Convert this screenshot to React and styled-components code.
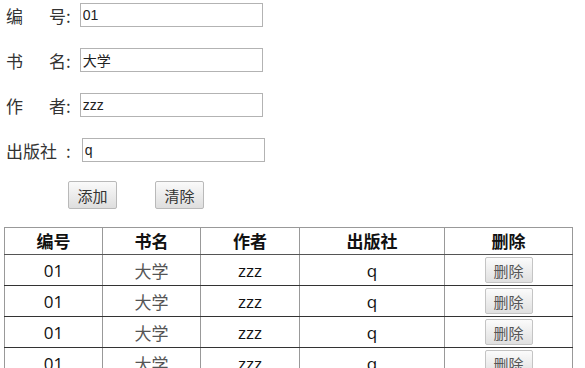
import React from 'react';
import styled, { createGlobalStyle } from 'styled-components';

const fields = [
  { chars: '编号', value: '01', spread: true },
  { chars: '书名', value: '大学', spread: true },
  { chars: '作者', value: 'zzz', spread: true },
  { chars: '出版社', value: 'q', spread: false },
];

const rows = [1, 2, 3, 4].map((i) => ({
  id: i,
  no: '01',
  name: '大学',
  author: 'zzz',
  press: 'q',
}));

export default function App() {
  return (
    <Page>
      <GlobalStyle />
      <Form>
        {fields.map((f) => (
          <FormRow key={f.chars}>
            <LabelText spread={f.spread}>{f.spread ? f.chars : f.chars + ' '}</LabelText>
            <Colon>:</Colon>
            <TextInput defaultValue={f.value} shift={f.spread ? 0 : 2} />
          </FormRow>
        ))}
        <Actions>
          <GrayButton>添加</GrayButton>
          <GrayButton>清除</GrayButton>
        </Actions>
      </Form>

      <Table>
        <thead>
          <tr>
            <Th width={97}>编号</Th>
            <Th width={97}>书名</Th>
            <Th width={98}>作者</Th>
            <Th width={144}>出版社</Th>
            <Th>删除</Th>
          </tr>
        </thead>
        <tbody>
          {rows.map((r) => (
            <tr key={r.id}>
              <Td>{r.no}</Td>
              <Td muted>{r.name}</Td>
              <Td>{r.author}</Td>
              <Td>{r.press}</Td>
              <Td>
                <SmallButton>删除</SmallButton>
              </Td>
            </tr>
          ))}
        </tbody>
      </Table>
    </Page>
  );
}

const GlobalStyle = createGlobalStyle`
  html, body {
    margin: 0;
    padding: 0;
    background: #fff;
  }
  body {
    font-family: "Noto Sans CJK SC", "Open Sans", sans-serif;
  }
`;

const Page = styled.div`
  padding: 3px 0 0 4px;
  width: 569px;
`;

const Form = styled.div`
  display: flex;
  flex-direction: column;
  padding-left: 2px;
`;

const FormRow = styled.div`
  display: flex;
  align-items: center;
  height: 24px;
  margin-bottom: 21px;

  &:nth-child(4) {
    margin-bottom: 19px;
  }
`;

const LabelText = styled.span`
  display: inline-block;
  width: 60px;
  font-size: 17px;
  color: #333;
  white-space: pre;
  text-align: ${(p) => (p.spread ? 'justify' : 'left')};
  text-align-last: ${(p) => (p.spread ? 'justify' : 'left')};
`;

const Colon = styled.span`
  font-size: 17px;
  color: #333;
`;

const TextInput = styled.input`
  box-sizing: border-box;
  width: 183px;
  height: 24px;
  margin-left: ${(p) => 9 + p.shift}px;
  border: 1px solid #b3b3b3;
  padding: 0 2px;
  font-family: "Liberation Sans", "Noto Sans CJK SC", sans-serif;
  font-size: 14px;
  color: #222;
  outline: none;
`;

const Actions = styled.div`
  display: flex;
  gap: 38px;
  padding-left: 62px;
  margin-bottom: 18px;
`;

const GrayButton = styled.button`
  width: 49px;
  height: 28px;
  padding: 0;
  border: 1px solid #b9b9b9;
  border-radius: 2px;
  background: linear-gradient(#fafafa, #dedede);
  font-family: "Noto Sans CJK SC", sans-serif;
  font-size: 15px;
  color: #333;
`;

const Table = styled.table`
  width: 569px;
  border-collapse: collapse;
  border: 1px solid #8a8a8a;
  table-layout: fixed;
`;

const Th = styled.th`
  height: 26px;
  padding: 0;
  border: 1px solid #999;
  border-bottom-color: #555;
  font-size: 17px;
  font-weight: 700;
  color: #111;
  line-height: 24px;
`;

const Td = styled.td`
  height: 30px;
  padding: 0;
  text-align: center;
  border-left: 1px solid #999;
  border-right: 1px solid #999;
  border-bottom: 1px solid #333;
  font-family: ${(p) => (p.muted ? '"Noto Sans CJK SC"' : '"Open Sans", "Noto Sans CJK SC"')}, sans-serif;
  font-size: 17px;
  font-weight: ${(p) => (p.muted ? 400 : 500)};
  color: ${(p) => (p.muted ? '#555' : '#111')};
`;

const SmallButton = styled.button`
  width: 48px;
  height: 26px;
  padding: 0;
  border: 1px solid #c4c4c4;
  border-radius: 2px;
  background: linear-gradient(#fbfbfb, #e0e0e0);
  font-family: "Noto Sans CJK SC", sans-serif;
  font-size: 15px;
  color: #555;
  vertical-align: middle;
`;
